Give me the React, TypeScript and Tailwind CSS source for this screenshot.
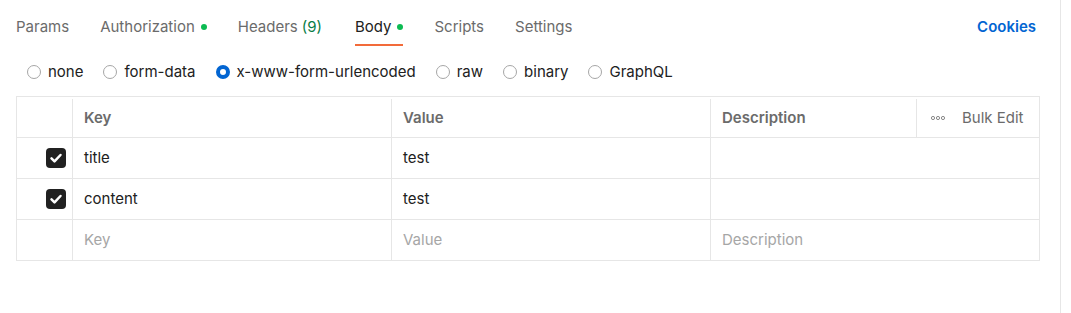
import React from 'react';

const tabs: { label: string; dot?: boolean; count?: string; active?: boolean }[] = [
  { label: 'Params' },
  { label: 'Authorization', dot: true },
  { label: 'Headers', count: '(9)' },
  { label: 'Body', dot: true, active: true },
  { label: 'Scripts' },
  { label: 'Settings' },
];

const bodyTypes = ['none', 'form-data', 'x-www-form-urlencoded', 'raw', 'binary', 'GraphQL'];

const rows = [
  { key: 'title', value: 'test' },
  { key: 'content', value: 'test' },
];

const Checkbox: React.FC = () => (
  <div className="flex h-5 w-5 items-center justify-center rounded-[4px] bg-[#212121]">
    <svg width="16" height="16" viewBox="0 0 16 16" fill="none">
      <path d="M3.5 8.3l3 3L12.5 5" stroke="white" strokeWidth="2.5" strokeLinecap="round" strokeLinejoin="round" />
    </svg>
  </div>
);

const Radio: React.FC<{ checked?: boolean }> = ({ checked }) =>
  checked ? (
    <span className="h-[14px] w-[14px] rounded-full border-[4px] border-[#0265d2]" />
  ) : (
    <span className="h-[14px] w-[14px] rounded-full border border-[#a6a6a6]" />
  );

export default function App() {
  return (
    <div className="flex h-[313px] w-[1071px] bg-white font-['Inter',sans-serif] text-[15px]">
      <div className="w-[1061px] border-r border-[#e6e6e6] pl-4 pr-5">
        {/* tabs */}
        <div className="flex h-[46px] items-end justify-between">
          <div className="flex gap-[31px]">
            {tabs.map((t) => (
              <div
                key={t.label}
                className={
                  'flex items-center pt-[16px] pb-[7px] leading-5 border-b-2 ' +
                  (t.active ? 'ml-[2px] border-[#f26b3a] text-[#212121]' : 'border-transparent text-[#6b6b6b]')
                }
              >
                <span>{t.label}</span>
                {t.count && <span className="ml-[4px] text-[#0a7d46]">{t.count}</span>}
                {t.dot && <span className="ml-[6px] h-[6px] w-[6px] rounded-full bg-[#0cbb52]" />}
              </div>
            ))}
          </div>
          <div className="pb-[9px] pr-1 font-semibold leading-5 text-[#0265d2]">Cookies</div>
        </div>

        {/* body types */}
        <div className="flex h-[50px] items-center gap-[20px] pl-[11px] pt-[1px]">
          {bodyTypes.map((b) => (
            <label key={b} className="flex items-center gap-[7px] leading-5 text-[#212121]">
              <Radio checked={b === 'x-www-form-urlencoded'} />
              <span>{b}</span>
            </label>
          ))}
        </div>

        {/* table */}
        <div className="border border-[#e6e6e6] text-[15px]">
          <div className="grid h-10 grid-cols-[55px_319px_319px_206px_1fr] pt-[2px] font-semibold text-[#6b6b6b]">
            <div />
            <div className="flex items-center border-l border-[#e6e6e6] pl-[11px]">Key</div>
            <div className="flex items-center border-l border-[#e6e6e6] pl-[11px]">Value</div>
            <div className="flex items-center border-l border-[#e6e6e6] pl-[11px]">Description</div>
            <div className="flex items-center border-l border-[#e6e6e6] pl-[14px] font-normal">
              <svg width="14" height="6" viewBox="0 0 14 6" fill="none" className="mr-[17px]">
                <circle cx="2" cy="3" r="1.6" stroke="#8a8a8a" strokeWidth="1" />
                <circle cx="7" cy="3" r="1.6" stroke="#8a8a8a" strokeWidth="1" />
                <circle cx="12" cy="3" r="1.6" stroke="#8a8a8a" strokeWidth="1" />
              </svg>
              <span>Bulk Edit</span>
            </div>
          </div>
          {rows.map((r) => (
            <div key={r.key} className="grid h-[41px] grid-cols-[55px_319px_319px_1fr] border-t border-[#e6e6e6] text-[#212121]">
              <div className="flex items-center justify-end pr-[6px]">
                <Checkbox />
              </div>
              <div className="flex items-center border-l border-[#e6e6e6] pl-[11px]">{r.key}</div>
              <div className="flex items-center border-l border-[#e6e6e6] pl-[11px]">{r.value}</div>
              <div className="border-l border-[#e6e6e6]" />
            </div>
          ))}
          <div className="grid h-[41px] grid-cols-[55px_319px_319px_1fr] border-t border-[#e6e6e6] text-[#a6a6a6]">
            <div />
            <div className="flex items-center border-l border-[#e6e6e6] pl-[11px]">Key</div>
            <div className="flex items-center border-l border-[#e6e6e6] pl-[11px]">Value</div>
            <div className="flex items-center border-l border-[#e6e6e6] pl-[11px]">Description</div>
          </div>
        </div>
      </div>
    </div>
  );
}
